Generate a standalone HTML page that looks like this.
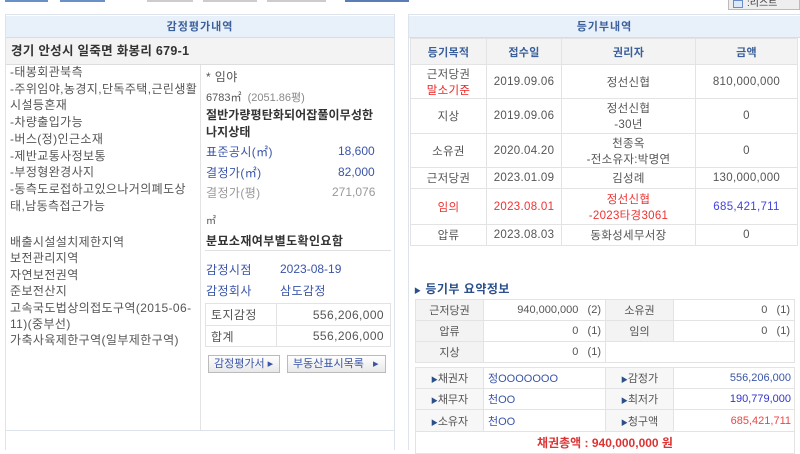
<!DOCTYPE html><html><head><meta charset="utf-8"><style>
*{margin:0;padding:0;box-sizing:border-box}
body{width:800px;height:450px;overflow:hidden;background:#fff;font-family:"Liberation Sans","Noto Sans CJK KR",sans-serif;font-size:11px;color:#555;position:relative}
.a{position:absolute}
table{border-collapse:collapse;position:absolute}
td{border:1px solid #e3e3e3}
.hd{background:#e8f0fa;color:#3a5f9a;text-align:center;font-weight:bold;font-size:11px;border-bottom:1px solid #d4dde8}
.bl{color:#3a55a8}
.k{font-size:12px;letter-spacing:0.4px}
</style></head><body>
<div class="a" style="left:5px;top:0;width:43px;height:2px;background:#6b8fc8"></div>
<div class="a" style="left:60px;top:0;width:45px;height:2px;background:#6b8fc8"></div>
<div class="a" style="left:147px;top:0;width:46px;height:2px;background:#ccc"></div>
<div class="a" style="left:203px;top:0;width:54px;height:2px;background:#ccc"></div>
<div class="a" style="left:267px;top:0;width:59px;height:2px;background:#ccc"></div>
<div class="a" style="left:345px;top:0;width:64px;height:2px;background:#5a7cb8"></div>
<div class="a" style="left:728px;top:-2px;width:72px;height:12px;border:1px solid #bbb;background:#eee;font-size:10px;color:#333;padding-left:18px;line-height:10px">:리스트</div>
<div class="a" style="left:733px;top:0;width:10px;height:8px;border:1px solid #6a8cc8;background:#dde8f8"></div>

<!-- left panel -->
<div class="a" style="left:5px;top:14px;width:390px;height:436px;border:1px solid #dde3ea;border-bottom:none"></div>
<div class="a hd" style="left:6px;top:16px;width:388px;height:22px;line-height:22px;letter-spacing:1px">감정평가내역</div>
<div class="a" style="left:6px;top:38px;width:388px;height:27px;background:#f3f3f3;border-bottom:1px solid #ddd;font-weight:bold;color:#333;font-size:12.5px;letter-spacing:0.3px;line-height:27px;padding-left:5px">경기 안성시 일죽면 화봉리 679-1</div>
<div class="a" style="left:200px;top:65px;width:1px;height:365px;background:#e3e3e3"></div>
<div class="a" style="left:6px;top:430px;width:388px;height:1px;background:#dde3ea"></div>
<div class="a k" style="left:10px;top:64px;width:190px;line-height:16.7px;color:#555">-태봉회관북측<br>-주위임야,농경지,단독주택,근린생활시설등혼재<br>-차량출입가능<br>-버스(정)인근소재<br>-제반교통사정보통<br>-부정형완경사지<br>-동측도로접하고있으나거의폐도상태,남동측접근가능</div>
<div class="a k" style="left:10px;top:234px;width:190px;line-height:16.4px;color:#555">배출시설설치제한지역<br>보전관리지역<br>자연보전권역<br>준보전산지<br>고속국도법상의접도구역(2015-06-11)(중부선)<br>가축사육제한구역(일부제한구역)</div>
<div class="a k" style="left:206px;top:68px">* 임야</div>
<div class="a" style="left:206px;top:89px;font-size:11px">6783㎡ <span style="color:#888">&nbsp;(2051.86평)</span></div>
<div class="a" style="left:206px;top:107px;width:188px;font-weight:bold;color:#333;line-height:17px;font-size:12px;letter-spacing:0.1px">절반가량평탄화되어잡풀이무성한<br>나지상태</div>
<div class="a bl k" style="left:206px;top:143px">표준공시(㎡)</div><div class="a bl" style="left:338px;top:144px;font-size:12px">18,600</div>
<div class="a bl k" style="left:206px;top:164px">결정가(㎡)</div><div class="a bl" style="left:338px;top:165px;font-size:12px">82,000</div>
<div class="a k" style="left:206px;top:184px;color:#999">결정가(평)</div><div class="a" style="left:332px;top:185px;color:#999;font-size:12px">271,076</div>
<div class="a" style="left:206px;top:212px;font-size:10px">㎡</div>
<div class="a k" style="left:206px;top:232px;font-weight:bold;color:#333">분묘소재여부별도확인요함</div>
<div class="a" style="left:205px;top:250px;width:186px;height:1px;background:#e0e0e0"></div>
<div class="a bl k" style="left:206px;top:261px">감정시점</div><div class="a bl" style="left:280px;top:262px;font-size:12px">2023-08-19</div>
<div class="a bl k" style="left:206px;top:282px">감정회사</div><div class="a bl k" style="left:280px;top:282px">삼도감정</div>
<table class="k" style="left:205px;top:303px;width:186px"><tr style="height:22px"><td style="padding-left:5px;width:71px">토지감정</td><td style="text-align:right;padding-right:6px">556,206,000</td></tr><tr style="height:21px"><td style="padding-left:5px">합계</td><td style="text-align:right;padding-right:6px">556,206,000</td></tr></table>
<div class="a" style="left:208px;top:355px;width:72px;height:18px;border:1px solid #bbb;background:linear-gradient(#fff,#e8e8e8);color:#3a55a8;font-size:11px;line-height:16px;padding-left:5px">감정평가서 ▸</div>
<div class="a" style="left:287px;top:355px;width:99px;height:18px;border:1px solid #bbb;background:linear-gradient(#fff,#e8e8e8);color:#3a55a8;font-size:11px;line-height:16px;padding-left:5px">부동산표시목록 &nbsp;&nbsp;▸</div>

<!-- right panel -->
<div class="a" style="left:408px;top:14px;width:392px;height:436px;border:1px solid #dde3ea;border-right:none;border-bottom:none"></div>
<div class="a hd" style="left:409px;top:16px;width:391px;height:22px;line-height:22px;letter-spacing:1px">등기부내역</div>
<table style="left:410px;top:38px;width:388px;text-align:center;font-size:11.5px;letter-spacing:0.3px">
<tr style="height:26px;background:#f3f3f3;color:#3a5f9a;font-weight:bold;font-size:11px"><td style="width:76px">등기목적</td><td style="width:75px">접수일</td><td style="width:134px">권리자</td><td>금액</td></tr>
<tr style="height:34px"><td>근저당권<br><span style="color:#e22">말소기준</span></td><td>2019.09.06</td><td>정선신협</td><td>810,000,000</td></tr>
<tr style="height:35px"><td>지상</td><td>2019.09.06</td><td>정선신협<br>-30년</td><td>0</td></tr>
<tr style="height:34px"><td>소유권</td><td>2020.04.20</td><td>천종옥<br>-전소유자:박명연</td><td>0</td></tr>
<tr style="height:21px"><td>근저당권</td><td>2023.01.09</td><td>김성례</td><td>130,000,000</td></tr>
<tr style="height:36px;color:#e33"><td>임의</td><td>2023.08.01</td><td>정선신협<br>-2023타경3061</td><td style="color:#44d">685,421,711</td></tr>
<tr style="height:21px"><td>압류</td><td>2023.08.03</td><td>동화성세무서장</td><td>0</td></tr>
</table>
<div class="a" style="left:414px;top:280px;font-weight:bold;color:#2a4f8a;font-size:12px;letter-spacing:0.5px"><span style="font-size:7px">▶</span> 등기부 요약정보</div>
<table style="left:415px;top:299px;width:380px;font-size:11px">
<tr style="height:21px"><td style="background:#f3f3f3;text-align:center;width:68px">근저당권</td><td style="text-align:right;padding-right:4px;width:122px">940,000,000 &nbsp;&nbsp;(2)</td><td style="background:#f3f3f3;text-align:center;width:68px">소유권</td><td style="text-align:right;padding-right:4px">0 &nbsp;&nbsp;(1)</td></tr>
<tr style="height:21px"><td style="background:#f3f3f3;text-align:center">압류</td><td style="text-align:right;padding-right:4px">0 &nbsp;&nbsp;(1)</td><td style="background:#f3f3f3;text-align:center">임의</td><td style="text-align:right;padding-right:4px">0 &nbsp;&nbsp;(1)</td></tr>
<tr style="height:21px"><td style="background:#f3f3f3;text-align:center">지상</td><td style="text-align:right;padding-right:4px">0 &nbsp;&nbsp;(1)</td><td colspan="2"></td></tr>
</table>
<table style="left:415px;top:367px;width:380px;font-size:11px">
<tr style="height:21px"><td style="background:#f7f7f7;text-align:center;width:68px"><span style="font-size:7px;color:#2a4f8a">▶</span>채권자</td><td class="bl" style="padding-left:4px;width:122px">정OOOOOOO</td><td style="background:#f7f7f7;text-align:center;width:68px"><span style="font-size:7px;color:#2a4f8a">▶</span>감정가</td><td class="bl" style="text-align:right;padding-right:3px">556,206,000</td></tr>
<tr style="height:21px"><td style="background:#f7f7f7;text-align:center"><span style="font-size:7px;color:#2a4f8a">▶</span>채무자</td><td class="bl" style="padding-left:4px">천OO</td><td style="background:#f7f7f7;text-align:center"><span style="font-size:7px;color:#2a4f8a">▶</span>최저가</td><td style="text-align:right;padding-right:3px;color:#33c">190,779,000</td></tr>
<tr style="height:22px"><td style="background:#f7f7f7;text-align:center"><span style="font-size:7px;color:#2a4f8a">▶</span>소유자</td><td class="bl" style="padding-left:4px">천OO</td><td style="background:#f7f7f7;text-align:center"><span style="font-size:7px;color:#2a4f8a">▶</span>청구액</td><td style="text-align:right;padding-right:3px;color:#e44">685,421,711</td></tr>
<tr style="height:22px"><td colspan="4" style="text-align:center;color:#d33;font-weight:bold;font-size:12px">채권총액 : 940,000,000 원</td></tr>
</table>
</body></html>
